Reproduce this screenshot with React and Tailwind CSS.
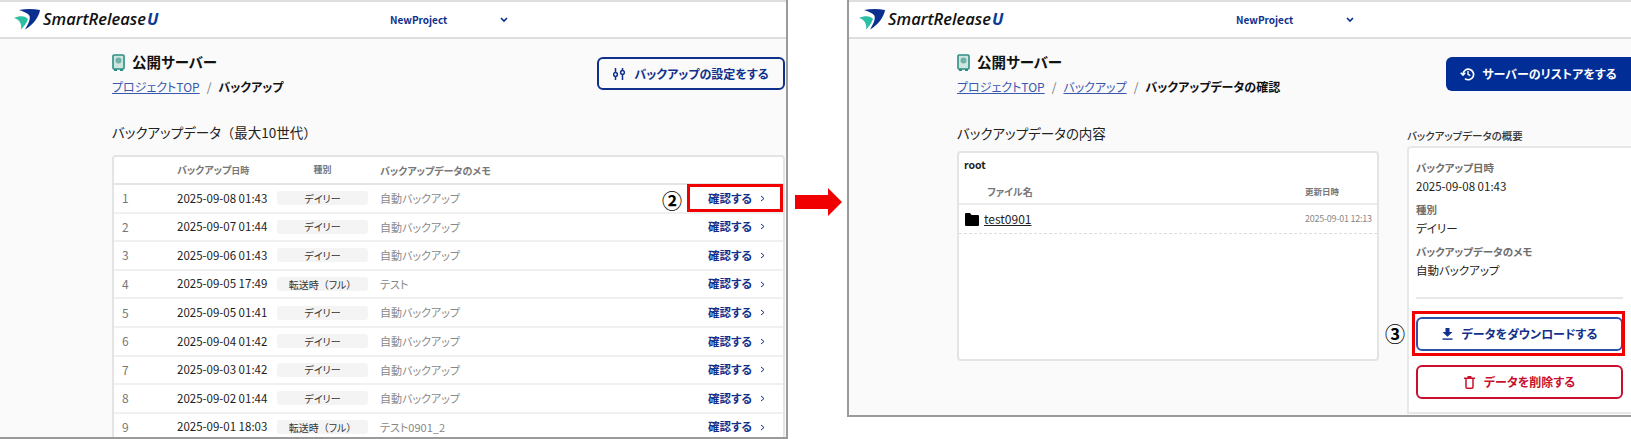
import React from "react";

const rows = [
  ["1", "2025-09-08 01:43", "デイリー", "自動バックアップ"],
  ["2", "2025-09-07 01:44", "デイリー", "自動バックアップ"],
  ["3", "2025-09-06 01:43", "デイリー", "自動バックアップ"],
  ["4", "2025-09-05 17:49", "転送時", "テスト"],
  ["5", "2025-09-05 01:41", "デイリー", "自動バックアップ"],
  ["6", "2025-09-04 01:42", "デイリー", "自動バックアップ"],
  ["7", "2025-09-03 01:42", "デイリー", "自動バックアップ"],
  ["8", "2025-09-02 01:44", "デイリー", "自動バックアップ"],
  ["9", "2025-09-01 18:03", "転送時", "テスト0901_2"],
];

function Full({ children }) {
  return <span className="[font-feature-settings:normal]">{children}</span>;
}

function Logo() {
  return (
    <div className="flex items-center gap-[3px]">
      <svg width="26" height="21" viewBox="0 0 26 21">
        <path d="M5 1 C13 -0.5 20 0 26 1 C25 8 19 16 11 20.5 C15 14 17 9 15 6 C13 3.5 9 2.5 5 1Z" fill="#0b2f8f" />
        <path d="M0 9 C6 6 12 7 14 10 C13 14 10 17 7 20.5 C8 15 6 11 0 9Z" fill="#2bbfa4" />
      </svg>
      <span className="font-['Open_Sans',sans-serif] italic font-semibold text-[16.5px] leading-none text-[#111]">
        SmartRelease<span className="ml-[1px] text-[#0b3a96] font-bold">U</span>
      </span>
    </div>
  );
}

function Header({ px, projX, chevGap }) {
  return (
    <div className={`h-[39px] shrink-0 bg-white border-t-2 border-b-2 border-[#dedede] flex items-center ${px}`}>
      <div className={projX}><Logo /></div>
      <span className="text-[10px] font-bold text-[#10308c] w-[113px]">NewProject</span>
      <svg width="8" height="6" viewBox="0 0 8 6" className={chevGap}>
        <path d="M1 1 L4 4 L7 1" fill="none" stroke="#10308c" strokeWidth="1.7" />
      </svg>
    </div>
  );
}

function ServerIcon() {
  return (
    <svg width="13" height="17" viewBox="0 0 13 17">
      <rect x="1" y="1" width="11" height="14" rx="1" fill="#cfe5df" stroke="#2c8f83" strokeWidth="1.6" />
      <circle cx="6.5" cy="6.5" r="3" fill="#6fb1a8" />
      <rect x="2" y="15" width="3" height="2" fill="#2c8f83" />
      <rect x="8" y="15" width="3" height="2" fill="#2c8f83" />
    </svg>
  );
}

function Title() {
  return (
    <div className="h-[20px] flex items-center">
      <ServerIcon />
      <span className="ml-[7px] text-[14.5px] font-bold text-[#111] leading-none">公開サーバー</span>
    </div>
  );
}

function Crumb({ children }) {
  return <a className="text-[#3a58b0] underline">{children}</a>;
}

function Sep() {
  return <span className="mx-[7px] text-[#777]">/</span>;
}

function Label({ children }) {
  return <div className="text-[10.5px] leading-[14px] font-bold text-[#6e6e6e]">{children}</div>;
}

function Value({ children }) {
  return <div className="mt-[2px] text-[11.5px] leading-[18px] text-[#222]">{children}</div>;
}

function Marker({ children, className }) {
  return <span className={`absolute text-[20px] leading-none font-bold text-black ${className}`}>{children}</span>;
}

export default function App() {
  return (
    <div className="relative w-[1631px] h-[439px] bg-white overflow-hidden flex font-['Noto_Sans_CJK_JP','Noto_Sans',sans-serif] [font-feature-settings:'palt']">
      {/* left */}
      <div className="w-[788px] h-[439px] shrink-0 flex flex-col bg-[#fafafa] border-r-2 border-b-2 border-[#9a9a9a] overflow-hidden">
        <Header px="pl-[14px]" projX="w-[376px]" chevGap="ml-[-3px]" />
        <div className="pl-[112px] pr-[1px] pt-[13px]">
          <div className="flex justify-between items-start">
            <div>
              <Title />
              <div className="mt-[5px] h-[20px] text-[12px] leading-[20px]">
                <Crumb>プロジェクトTOP</Crumb><Sep /><span className="font-bold text-[#111]">バックアップ</span>
              </div>
            </div>
            <button className="mt-[5px] w-[188px] h-[33px] rounded-[6px] border-2 border-[#10308c] flex items-center justify-center gap-[9px] text-[12px] font-bold text-[#10308c]">
              <svg width="12" height="14" viewBox="0 0 12 14" fill="none" stroke="#10308c" strokeWidth="1.5">
                <path d="M2.5 1V5M2.5 10V13M9.5 1V3M9.5 8V13" />
                <circle cx="2.5" cy="7.5" r="1.9" />
                <circle cx="9.5" cy="5.5" r="1.9" />
              </svg>
              バックアップの設定をする
            </button>
          </div>
          <div className="mt-[25px] h-[20px] text-[13.5px] leading-[20px] text-[#222]">バックアップデータ<Full>（</Full>最大10世代<Full>）</Full></div>
          <div className="mt-[13px] bg-white border-2 border-[#e4e4e4] rounded-[4px] border-b-0">
            <div className="h-[28px] flex items-center text-[10px] font-bold text-[#777] border-b-2 border-[#e4e4e4]">
              <div className="w-[63px]" />
              <div className="w-[100px]">バックアップ<span className="text-[9px]">日時</span></div>
              <div className="w-[91px] text-center text-[9px]">種別</div>
              <div className="ml-[12px]">バックアップデータのメモ</div>
            </div>
            {rows.map((r) => (
              <div key={r[0]} className="h-[28.6px] flex items-center border-b-2 border-[#f0f0f0]">
                <div className="w-[63px] pl-[8px] text-[12px] text-[#777]">{r[0]}</div>
                <div className="w-[100px] text-[11.5px] text-[#222]">{r[1]}</div>
                <div className="w-[91px] h-[14px] rounded-[3px] bg-[#f4f4f4] flex items-center justify-center text-[10px] text-[#333]">
                  {r[2]}
                  {r[2] === "転送時" && <><Full>（</Full>フル<Full>）</Full></>}
                </div>
                <div className="ml-[12px] flex-1 text-[11px] text-[#888]">{r[3]}</div>
                <div className="w-[75px] flex items-center text-[11.5px] font-bold text-[#10308c]">
                  確認する
                  <svg width="5" height="7" viewBox="0 0 5 7" className="ml-[8px]">
                    <path d="M1 1 L4 3.5 L1 6" fill="none" stroke="#10308c" strokeWidth="1" />
                  </svg>
                </div>
              </div>
            ))}
          </div>
        </div>
      </div>

      {/* right */}
      <div className="ml-[59px] w-[784px] h-[417px] shrink-0 flex flex-col bg-[#fafafa] border-l-2 border-b-2 border-[#9a9a9a] overflow-hidden">
        <Header px="pl-[10px]" projX="w-[377px]" chevGap="ml-[-3px]" />
        <div className="pl-[108px] pt-[13px]">
          <div className="flex justify-between items-start">
            <div>
              <Title />
              <div className="mt-[5px] h-[20px] text-[12px] leading-[20px]">
                <Crumb>プロジェクトTOP</Crumb><Sep /><Crumb>バックアップ</Crumb><Sep /><span className="font-bold text-[#111]">バックアップデータの確認</span>
              </div>
            </div>
            <button className="mt-[5px] w-[185px] h-[34px] rounded-l-[6px] bg-[#002d96] flex items-center justify-center gap-[7px] text-[12px] font-bold text-white">
              <svg width="15" height="14" viewBox="0 0 15 14" fill="none" stroke="white" strokeWidth="1.7">
                <path d="M3 7 A5.3 5.3 0 1 1 5 11.6" />
                <path d="M0.7 5.7 L3 8.2 L5.3 5.7" strokeWidth="1.4" />
                <path d="M8 4 V7.3 L10.3 8.6" strokeWidth="1.4" />
              </svg>
              サーバーのリストアをする
            </button>
          </div>
          <div className="flex mt-[22px]">
            <div className="w-[422px]">
              <div className="h-[20px] mt-[4px] text-[13.5px] leading-[20px] text-[#222]">バックアップデータの内容</div>
              <div className="mt-[8px] h-[210px] bg-white border-2 border-[#e4e4e4] rounded-[4px]">
                <div className="pl-[5px] pt-[2px] h-[26px] text-[10.5px] leading-[20px] font-bold text-[#222]">root</div>
                <div className="h-[26px] flex items-center border-b-2 border-[#ececec] text-[10px] font-bold text-[#777]">
                  <div className="w-[346px] pl-[28px]">ファイル名</div>
                  <div className="text-[8.5px]">更新日時</div>
                </div>
                <div className="h-[29px] flex items-center border-b border-dashed border-[#ddd]">
                  <div className="w-[346px] pl-[6px] flex items-center">
                    <svg width="14" height="13" viewBox="0 0 14 13">
                      <path d="M0 1 Q0 0 1 0 H5 L6.5 2 H13 Q14 2 14 3 V12 Q14 13 13 13 H1 Q0 13 0 12Z" fill="#000" />
                    </svg>
                    <span className="ml-[5px] text-[12px] text-[#222] underline">test0901</span>
                  </div>
                  <div className="text-[9px] tracking-[-0.25px] whitespace-nowrap text-[#888]">2025-09-01 12:13</div>
                </div>
              </div>
            </div>
            <div className="ml-[28px] w-[224px]">
              <div className="h-[14px] mt-[10px] text-[10.5px] leading-[14px] font-medium text-[#333]">バックアップデータの概要</div>
              <div className="mt-[3px] h-[268px] bg-white border-l-2 border-t-2 border-b-2 border-[#e8e8e8] rounded-tl-[4px] pl-[7px] pr-[8px] pt-[13px]">
                <Label>バックアップ日時</Label>
                <Value>2025-09-08 01:43</Value>
                <div className="mt-[8px]"><Label>種別</Label><Value>デイリー</Value></div>
                <div className="mt-[8px]"><Label>バックアップデータのメモ</Label><Value>自動バックアップ</Value></div>
                <div className="mt-[18px] border-t-2 border-[#e8e8e8]" />
                <button className="mt-[18px] w-full h-[34px] rounded-[6px] border-2 border-[#2a52a8] flex items-center justify-center gap-[9px] text-[12px] font-bold text-[#10308c]">
                  <svg width="11" height="12" viewBox="0 0 11 12" fill="#10308c">
                    <path d="M3.5 0H7.5V4H10.5L5.5 8.8L0.5 4H3.5Z" />
                    <rect x="0.5" y="10.4" width="10" height="1.4" />
                  </svg>
                  データをダウンロードする
                </button>
                <button className="mt-[14px] w-full h-[34px] rounded-[6px] border-2 border-[#c8102e] flex items-center justify-center gap-[9px] text-[12px] font-bold text-[#c8102e]">
                  <svg width="11" height="13" viewBox="0 0 11 13" fill="none" stroke="#c8102e" strokeWidth="1.5">
                    <path d="M0 2.2H11M2 2.2V11Q2 12.2 3 12.2H8Q9 12.2 9 11V2.2M3.5 0.7H7.5" />
                  </svg>
                  データを削除する
                </button>
              </div>
            </div>
          </div>
        </div>
      </div>

      {/* annotations */}
      <div className="absolute left-[687px] top-[184px] w-[96px] h-[28px] border-[3px] border-[#f00000]" />
      <Marker className="left-[662px] top-[191px]">②</Marker>
      <svg className="absolute left-[795px] top-[188px]" width="47" height="28" viewBox="0 0 47 28">
        <path d="M0 7 H33 V0 L47 14 L33 28 V21 H0Z" fill="#f00000" />
      </svg>
      <div className="absolute left-[1412px] top-[311px] w-[213px] h-[45px] border-[3px] border-[#f00000]" />
      <Marker className="left-[1385px] top-[324px]">③</Marker>
    </div>
  );
}
